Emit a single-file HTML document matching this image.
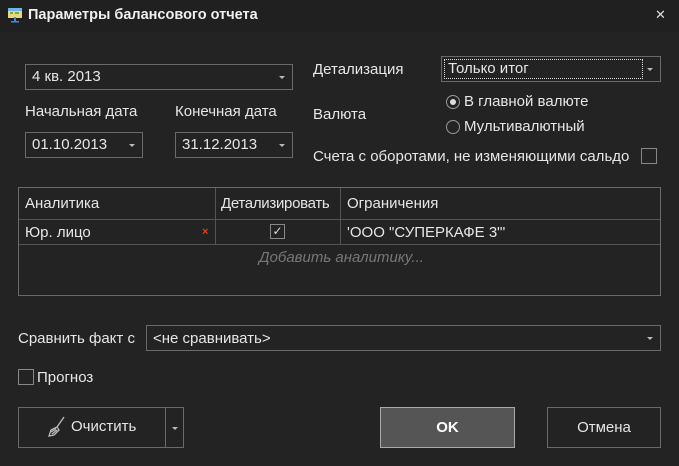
<!DOCTYPE html>
<html><head><meta charset="utf-8"><style>
*{box-sizing:border-box;margin:0;padding:0}
body{width:679px;height:466px;background:#232323;color:#e6e6e6;font-family:"Liberation Sans","DejaVu Sans",sans-serif;font-size:15px;position:relative;overflow:hidden}
.a{position:absolute}
.box{position:absolute;border:1px solid #6a6a6a;background:#232323}
.arr{position:absolute;right:7px;top:50%;margin-top:-1px;width:0;height:0;border-left:3px solid transparent;border-right:3px solid transparent;border-top:3px solid #bbb}
.t{position:absolute;white-space:nowrap}
</style></head><body>
<div class="a" style="left:0;top:0;width:679px;height:32px;background:#202020"></div>
<svg class="a" style="left:7px;top:7px" width="16" height="16" viewBox="0 0 16 16">
<rect x="1" y="1" width="14" height="10" fill="#e8d880"/><rect x="1" y="1" width="14" height="3" fill="#6fb3e0"/>
<rect x="3" y="5" width="3" height="2" fill="#6ab04c"/><rect x="8" y="5" width="4" height="2" fill="#6ab04c"/>
<rect x="7" y="10" width="2" height="5" fill="#3a8ed8"/><rect x="4" y="14" width="8" height="1.5" fill="#3a8ed8"/></svg>
<div class="t" style="left:28px;top:7px;font-weight:bold;font-size:14.5px;color:#f0f0f0">Параметры балансового отчета</div>
<div class="t" style="left:655px;top:7px;font-size:13px;color:#ddd">✕</div>

<div class="box" style="left:25px;top:64px;width:268px;height:26px"><span class="t" style="left:6px;top:3px">4 кв. 2013</span><i class="arr"></i></div>
<div class="t" style="left:25px;top:103px">Начальная дата</div>
<div class="t" style="left:175px;top:103px">Конечная дата</div>
<div class="box" style="left:25px;top:132px;width:118px;height:26px"><span class="t" style="left:6px;top:3px">01.10.2013</span><i class="arr"></i></div>
<div class="box" style="left:175px;top:132px;width:118px;height:26px"><span class="t" style="left:6px;top:3px">31.12.2013</span><i class="arr"></i></div>

<div class="t" style="left:313px;top:61px">Детализация</div>
<div class="box" style="left:441px;top:56px;width:220px;height:26px"><div class="a" style="left:2px;top:2px;width:199px;height:20px;border:1px dotted #ddd"></div><span class="t" style="left:6px;top:3px">Только итог</span><i class="arr"></i></div>
<div class="t" style="left:313px;top:106px">Валюта</div>
<div class="a" style="left:446px;top:95px;width:14px;height:14px;border:1px solid #999;border-radius:50%"><div class="a" style="left:3px;top:3px;width:6px;height:6px;border-radius:50%;background:#ddd"></div></div>
<div class="t" style="left:464px;top:93px">В главной валюте</div>
<div class="a" style="left:446px;top:120px;width:14px;height:14px;border:1px solid #999;border-radius:50%"></div>
<div class="t" style="left:464px;top:118px">Мультивалютный</div>
<div class="t" style="left:313px;top:148px">Счета с оборотами, не изменяющими сальдо</div>
<div class="a" style="left:641px;top:148px;width:16px;height:16px;border:1px solid #888"></div>

<div class="box" style="left:18px;top:187px;width:643px;height:109px"></div>
<div class="a" style="left:19px;top:219px;width:641px;height:1px;background:#555"></div>
<div class="a" style="left:19px;top:244px;width:641px;height:1px;background:#555"></div>
<div class="a" style="left:215px;top:188px;width:1px;height:56px;background:#555"></div>
<div class="a" style="left:340px;top:188px;width:1px;height:56px;background:#555"></div>
<div class="t" style="left:25px;top:195px">Аналитика</div>
<div class="t" style="left:221px;top:195px;letter-spacing:-0.3px">Детализировать</div>
<div class="t" style="left:347px;top:195px">Ограничения</div>
<div class="t" style="left:25px;top:224px">Юр. лицо</div>
<div class="t" style="left:202px;top:226px;color:#e0401a;font-size:11px;font-weight:bold">×</div>
<div class="a" style="left:270px;top:224px;width:15px;height:15px;border:1px solid #888;font-size:12px;line-height:13px;text-align:center;color:#ddd">✓</div>
<div class="t" style="left:347px;top:224px">'ООО "СУПЕРКАФЕ 3"'</div>
<div class="t" style="left:259px;top:249px;color:#777;font-style:italic">Добавить аналитику...</div>

<div class="t" style="left:18px;top:330px">Сравнить факт с</div>
<div class="box" style="left:146px;top:325px;width:515px;height:26px"><span class="t" style="left:6px;top:4px">&lt;не сравнивать&gt;</span><i class="arr"></i></div>
<div class="a" style="left:18px;top:369px;width:16px;height:16px;border:1px solid #888"></div>
<div class="t" style="left:37px;top:369px">Прогноз</div>

<div class="box" style="left:18px;top:407px;width:166px;height:41px"><div class="a" style="left:146px;top:0;width:1px;height:39px;background:#6a6a6a"></div><i class="arr" style="right:5px"></i>
<svg class="a" style="left:28px;top:8px" width="20" height="22" viewBox="0 0 20 22"><path d="M17 1L10 11M10 11L4 14L2 20L7 19L12 14ZM4 16L9 13M5 18L10 14" stroke="#bbb" stroke-width="1.3" fill="none"/></svg>
<span class="t" style="left:52px;top:10px">Очистить</span></div>
<div class="a" style="left:380px;top:407px;width:135px;height:41px;background:#555;border:1px solid #aaa;text-align:center;line-height:39px;font-weight:bold;color:#fff">OK</div>
<div class="box" style="left:547px;top:407px;width:114px;height:41px;text-align:center;line-height:39px">Отмена</div>
</body></html>
